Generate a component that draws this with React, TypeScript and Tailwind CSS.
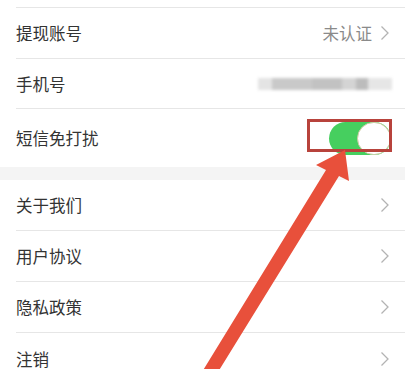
import React from "react";

const Chevron = () => (
  <svg width="10" height="16" viewBox="0 0 10 16" className="shrink-0">
    <path d="M1.5 1.5 L8 8 L1.5 14.5" fill="none" stroke="#b3b3b3" strokeWidth="1.3" />
  </svg>
);

const Row = ({
  label,
  right,
  h = "h-[51px]",
  divider = true,
}: {
  label: string;
  right?: React.ReactNode;
  h?: string;
  divider?: boolean;
}) => (
  <div className="pl-4">
    <div
      className={`flex items-center justify-between pr-[15px] ${h} ${
        divider ? "border-b border-[#e6e6e6]" : ""
      }`}
    >
      <span className="text-[16.5px] leading-[20px] text-[#333]">{label}</span>
      {right}
    </div>
  </div>
);

const BlurredNumber = () => (
  <div className="flex items-center h-[14px] blur-[1.5px] -mr-[2px]">
    <div className="w-[14px] h-[12px] bg-[#e4e4e4]" />
    <div className="w-[40px] h-[12px] bg-[#c9c9c9]" />
    <div className="w-[30px] h-[12px] bg-[#c2c2c2]" />
    <div className="w-[14px] h-[12px] bg-[#d4d4d4]" />
    <div className="w-[12px] h-[12px] bg-[#bcbcbc]" />
    <div className="w-[24px] h-[12px] bg-[#e6e6e6]" />
  </div>
);

const Toggle = () => (
  <div className="relative w-[62px] h-[33px] rounded-full bg-[#46cf5f] -mr-[1px]">
    <div className="absolute right-0 top-0 w-[34px] h-[33px] rounded-full bg-white border border-[#cfcaa5]" />
  </div>
);

export default function App() {
  return (
    <div
      className="relative w-full h-[369px] overflow-hidden bg-white"
      style={{ fontFamily: '"Noto Sans CJK SC", "Noto Sans", sans-serif' }}
    >
      <div className="pl-4">
        <div className="h-[8px] border-b border-[#e6e6e6]" />
      </div>
      <Row
        label="提现账号"
        right={
          <div className="flex items-center gap-[8px]">
            <span className="text-[16.5px] leading-[20px] text-[#8a8a8a]">未认证</span>
            <Chevron />
          </div>
        }
      />
      <Row label="手机号" h="h-[50px]" right={<BlurredNumber />} />
      <Row label="短信免打扰" h="h-[58px]" divider={false} right={<Toggle />} />
      <div className="h-[13px] bg-[#f4f4f4]" />
      <Row label="关于我们" right={<Chevron />} />
      <Row label="用户协议" right={<Chevron />} />
      <Row label="隐私政策" right={<Chevron />} />
      <Row label="注销" right={<Chevron />} divider={false} />

      {/* annotation overlay */}
      <div className="absolute left-[307px] top-[119px] w-[85px] h-[33px] border-[3px] border-[#b8433c] pointer-events-none" />
      <svg
        className="absolute left-0 top-0 pointer-events-none"
        width="405"
        height="369"
        viewBox="0 0 405 369"
      >
        <polygon
          points="345,150 349,181 339,176 218,372 202,372 326,170 316,165"
          fill="#e8503b"
        />
      </svg>
    </div>
  );
}
